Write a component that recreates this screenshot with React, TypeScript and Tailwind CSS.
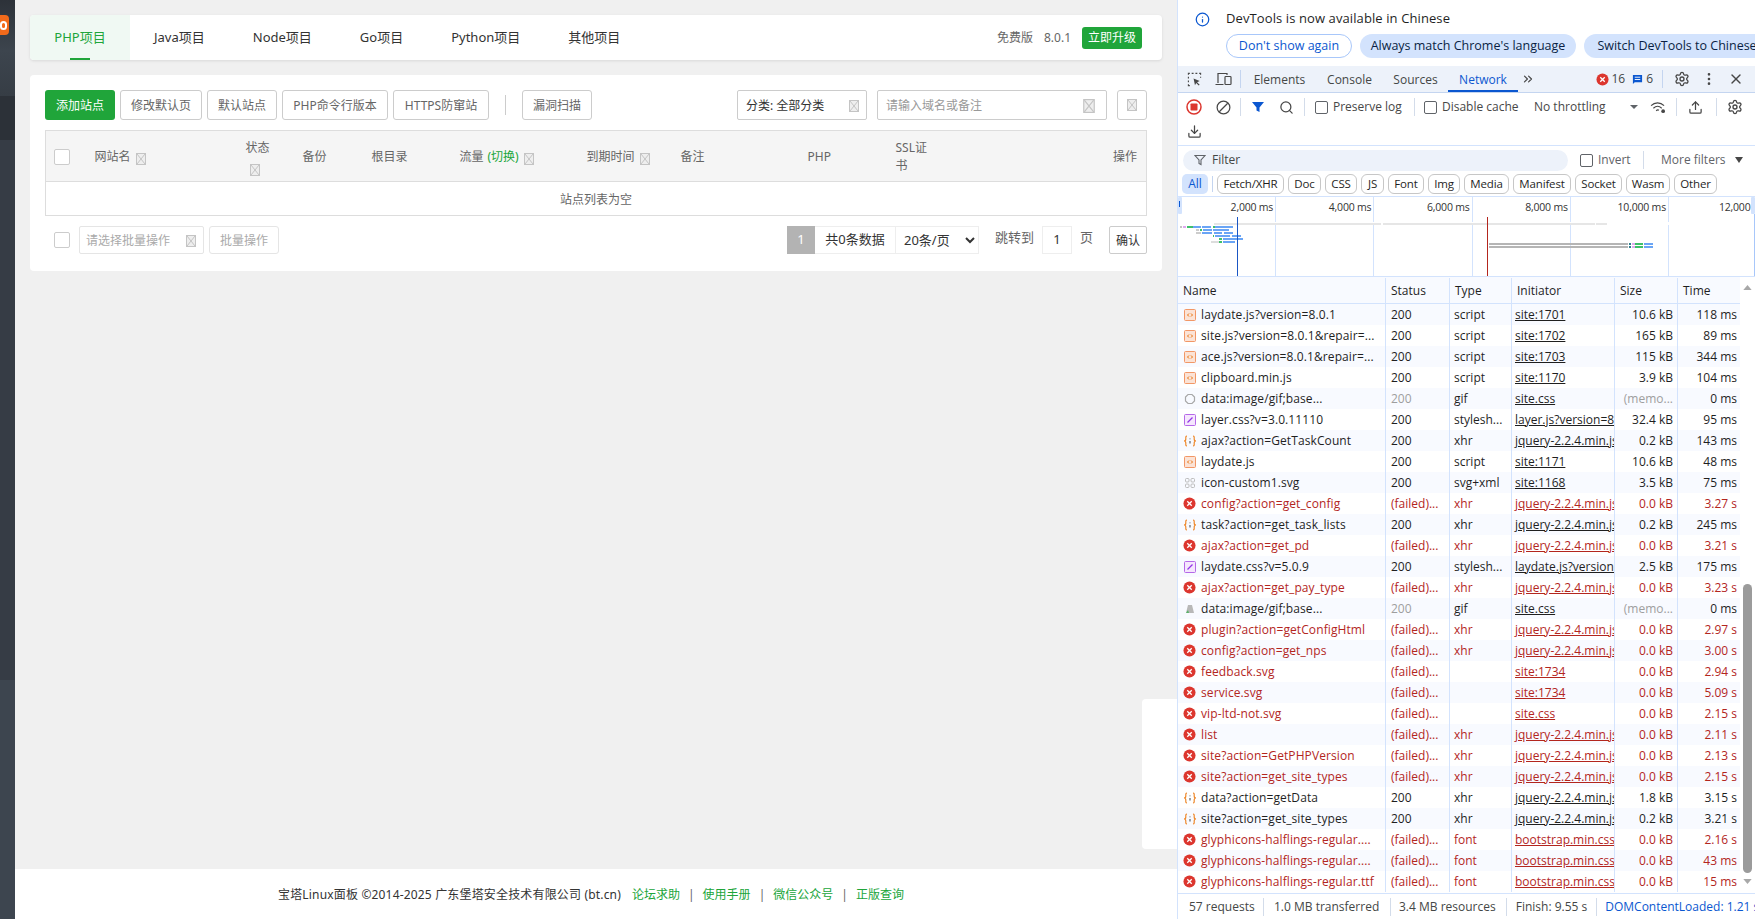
import { ChevronsRight, Download, Info, MoreVertical, Search, Settings, Upload, X } from 'lucide-react';

const tabs = [
  { label: 'PHP项目', active: true },
  { label: 'Java项目' },
  { label: 'Node项目' },
  { label: 'Go项目' },
  { label: 'Python项目' },
  { label: '其他项目' },
];

const typeFilters = [
  { label: 'Fetch/XHR', w: 'w-[67px]' },
  { label: 'Doc', w: 'w-[33px]' },
  { label: 'CSS', w: 'w-[32px]' },
  { label: 'JS', w: 'w-[23px]' },
  { label: 'Font', w: 'w-[36px]' },
  { label: 'Img', w: 'w-[32px]' },
  { label: 'Media', w: 'w-[45px]' },
  { label: 'Manifest', w: 'w-[58px]' },
  { label: 'Socket', w: 'w-[47px]' },
  { label: 'Wasm', w: 'w-[44px]' },
  { label: 'Other', w: 'w-[43px]' },
];

type Kind = 'script' | 'css' | 'xhr' | 'fail' | 'gif' | 'svg' | 'img';
type Req = { name: string; status: string; type: string; init: string; size: string; time: string; kind: Kind };

const jq = 'jquery-2.2.4.min.js';
const boot = 'bootstrap.min.css';
const requests: Req[] = [
  { name: 'laydate.js?version=8.0.1', status: '200', type: 'script', init: 'site:1701', size: '10.6 kB', time: '118 ms', kind: 'script' },
  { name: 'site.js?version=8.0.1&repair=...', status: '200', type: 'script', init: 'site:1702', size: '165 kB', time: '89 ms', kind: 'script' },
  { name: 'ace.js?version=8.0.1&repair=...', status: '200', type: 'script', init: 'site:1703', size: '115 kB', time: '344 ms', kind: 'script' },
  { name: 'clipboard.min.js', status: '200', type: 'script', init: 'site:1170', size: '3.9 kB', time: '104 ms', kind: 'script' },
  { name: 'data:image/gif;base...', status: '200', type: 'gif', init: 'site.css', size: '(memo...', time: '0 ms', kind: 'gif' },
  { name: 'layer.css?v=3.0.11110', status: '200', type: 'stylesh...', init: 'layer.js?version=8.0.1', size: '32.4 kB', time: '95 ms', kind: 'css' },
  { name: 'ajax?action=GetTaskCount', status: '200', type: 'xhr', init: jq, size: '0.2 kB', time: '143 ms', kind: 'xhr' },
  { name: 'laydate.js', status: '200', type: 'script', init: 'site:1171', size: '10.6 kB', time: '48 ms', kind: 'script' },
  { name: 'icon-custom1.svg', status: '200', type: 'svg+xml', init: 'site:1168', size: '3.5 kB', time: '75 ms', kind: 'svg' },
  { name: 'config?action=get_config', status: '(failed)...', type: 'xhr', init: jq, size: '0.0 kB', time: '3.27 s', kind: 'fail' },
  { name: 'task?action=get_task_lists', status: '200', type: 'xhr', init: jq, size: '0.2 kB', time: '245 ms', kind: 'xhr' },
  { name: 'ajax?action=get_pd', status: '(failed)...', type: 'xhr', init: jq, size: '0.0 kB', time: '3.21 s', kind: 'fail' },
  { name: 'laydate.css?v=5.0.9', status: '200', type: 'stylesh...', init: 'laydate.js?version=8.0.1', size: '2.5 kB', time: '175 ms', kind: 'css' },
  { name: 'ajax?action=get_pay_type', status: '(failed)...', type: 'xhr', init: jq, size: '0.0 kB', time: '3.23 s', kind: 'fail' },
  { name: 'data:image/gif;base...', status: '200', type: 'gif', init: 'site.css', size: '(memo...', time: '0 ms', kind: 'img' },
  { name: 'plugin?action=getConfigHtml', status: '(failed)...', type: 'xhr', init: jq, size: '0.0 kB', time: '2.97 s', kind: 'fail' },
  { name: 'config?action=get_nps', status: '(failed)...', type: 'xhr', init: jq, size: '0.0 kB', time: '3.00 s', kind: 'fail' },
  { name: 'feedback.svg', status: '(failed)...', type: '', init: 'site:1734', size: '0.0 kB', time: '2.94 s', kind: 'fail' },
  { name: 'service.svg', status: '(failed)...', type: '', init: 'site:1734', size: '0.0 kB', time: '5.09 s', kind: 'fail' },
  { name: 'vip-ltd-not.svg', status: '(failed)...', type: '', init: 'site.css', size: '0.0 kB', time: '2.15 s', kind: 'fail' },
  { name: 'list', status: '(failed)...', type: 'xhr', init: jq, size: '0.0 kB', time: '2.11 s', kind: 'fail' },
  { name: 'site?action=GetPHPVersion', status: '(failed)...', type: 'xhr', init: jq, size: '0.0 kB', time: '2.13 s', kind: 'fail' },
  { name: 'site?action=get_site_types', status: '(failed)...', type: 'xhr', init: jq, size: '0.0 kB', time: '2.15 s', kind: 'fail' },
  { name: 'data?action=getData', status: '200', type: 'xhr', init: jq, size: '1.8 kB', time: '3.15 s', kind: 'xhr' },
  { name: 'site?action=get_site_types', status: '200', type: 'xhr', init: jq, size: '0.2 kB', time: '3.21 s', kind: 'xhr' },
  { name: 'glyphicons-halflings-regular....', status: '(failed)...', type: 'font', init: boot, size: '0.0 kB', time: '2.16 s', kind: 'fail' },
  { name: 'glyphicons-halflings-regular....', status: '(failed)...', type: 'font', init: boot, size: '0.0 kB', time: '43 ms', kind: 'fail' },
  { name: 'glyphicons-halflings-regular.ttf', status: '(failed)...', type: 'font', init: boot, size: '0.0 kB', time: '15 ms', kind: 'fail' },
];

// bars of the overview chart, in page coordinates
const overviewBars: [number, number, number, string][] = [
  [1214, 223, 12, '#e6e6e6'], [1226, 223, 155, '#e6e6e6'], [1383, 223, 212, '#e6e6e6'], [1596, 223, 11, '#e6e6e6'],
  [1180, 226, 2, '#c4c4c4'], [1183, 226, 3, '#e0a8f0'], [1187, 226, 6, '#3fc06a'], [1193, 226, 8, '#6aa5f5'], [1202, 226, 9, '#6aa5f5'], [1213, 226, 2, '#3fc06a'], [1215, 226, 18, '#6aa5f5'],
  [1196, 229, 3, '#cccccc'], [1200, 229, 2, '#3fc06a'], [1203, 229, 9, '#6aa5f5'], [1213, 229, 16, '#6aa5f5'],
  [1196, 232, 5, '#cccccc'], [1202, 232, 10, '#6aa5f5'], [1214, 232, 8, '#6aa5f5'], [1224, 232, 9, '#6aa5f5'],
  [1213, 235, 1, '#3fc06a'], [1215, 235, 15, '#6aa5f5'], [1232, 235, 9, '#6aa5f5'],
  [1219, 238, 3, '#3fc06a'], [1223, 238, 20, '#6aa5f5'],
  [1211, 241, 8, '#dddddd'], [1219, 241, 3, '#3fc06a'], [1223, 241, 12, '#6aa5f5'],
  [1489, 243, 139, '#b5b5b5'], [1489, 246, 139, '#b5b5b5'],
  [1629, 243, 2, '#2f7f8f'], [1629, 246, 2, '#2f7f8f'], [1632, 243, 3, '#e0a8f0'], [1632, 246, 3, '#e0a8f0'],
  [1635, 243, 8, '#3fc06a'], [1635, 246, 8, '#3fc06a'], [1644, 243, 9, '#6aa5f5'], [1644, 246, 9, '#6aa5f5'],
];

function BrokenImg({ className = '' }: { className?: string }) {
  return (
    <svg viewBox="0 0 10 12" className={`w-[10px] h-[12px] shrink-0 ${className}`} fill="none" stroke="#c4c4c4" strokeWidth="1">
      <rect x="0.5" y="0.5" width="9" height="11" fill="#eeeeee" />
      <path d="M1 1l8 10M9 1L1 11" />
    </svg>
  );
}

function CheckBox() {
  return <div className="w-4 h-4 rounded-[2px] border border-[#cccccc] bg-white shrink-0" />;
}

function DevCheck() {
  return <span className="block w-[13px] h-[13px] rounded-[2px] border border-[#5f6368] bg-white shrink-0" />;
}

function ToolSep() {
  return <span className="block w-px h-[18px] bg-[#d3dcea] shrink-0" />;
}

function ReqIcon({ kind }: { kind: Kind }) {
  if (kind === 'fail') {
    return (
      <svg viewBox="0 0 14 14" className="w-[13px] h-[13px]">
        <circle cx="7" cy="7" r="6.5" fill="#dc362e" />
        <path d="M4.6 4.6l4.8 4.8M9.4 4.6L4.6 9.4" stroke="#fff" strokeWidth="1.4" />
      </svg>
    );
  }
  if (kind === 'script') {
    return (
      <svg viewBox="0 0 12 12" className="w-[12px] h-[12px]" fill="none">
        <rect x="0.5" y="0.5" width="11" height="11" rx="1" fill="#fbe3d6" stroke="#f29766" />
        <path d="M5 4.5L3.5 6 5 7.5M7 4.5L8.5 6 7 7.5" stroke="#e8710a" />
      </svg>
    );
  }
  if (kind === 'css') {
    return (
      <svg viewBox="0 0 12 12" className="w-[12px] h-[12px]" fill="none">
        <rect x="0.5" y="0.5" width="11" height="11" rx="1" fill="#f5e6fd" stroke="#b568e8" />
        <path d="M3.5 8.5L8.5 3.5" stroke="#9334e6" strokeWidth="1.2" />
      </svg>
    );
  }
  if (kind === 'xhr') {
    return (
      <svg viewBox="0 0 14 12" className="w-[14px] h-[12px]" fill="none" stroke="#ee8a2e" strokeWidth="1.2">
        <path d="M4 1C2.500 1 2.800 2.500 2.800 4S2.400 6 1 6c1.400 0 1.800.5 1.800 2S2.500 11 4 11M10 1c1.500 0 1.200 1.500 1.200 3S11.600 6 13 6c-1.400 0-1.800.5-1.800 2s.3 3-1.200 3" />
        <path d="M7 3.500v.8M7 6v2.500" stroke="#5f6368" />
      </svg>
    );
  }
  if (kind === 'svg') {
    return (
      <svg viewBox="0 0 12 12" className="w-[12px] h-[12px]" fill="none" stroke="#bdbdbd">
        <rect x="1.500" y="1.500" width="3.500" height="3.500" rx="1" />
        <rect x="7" y="1.500" width="3.500" height="3.500" rx="1" />
        <rect x="1.500" y="7" width="3.500" height="3.500" rx="1" />
        <rect x="7" y="7" width="3.500" height="3.500" rx="1" />
      </svg>
    );
  }
  if (kind === 'img') {
    return (
      <svg viewBox="0 0 12 12" className="w-[12px] h-[12px]">
        <path d="M4 2h4l2 8H2z" fill="#b8b8b8" />
        <path d="M2 10h3l-1-3z" fill="#58b368" />
      </svg>
    );
  }
  return (
    <svg viewBox="0 0 12 12" className="w-[12px] h-[12px]" fill="none" stroke="#a8a8a8" strokeWidth="1.2">
      <path d="M4 1.500h4L10.500 4v4L8 10.500H4L1.500 8V4z" />
    </svg>
  );
}

function SitePanel() {
  return (
    <div className="flex-1 flex flex-col min-h-0">
      <div className="px-[15px] pt-[15px]">
        <div className="h-[45px] bg-white rounded-[4px] shadow-[0_1px_3px_rgba(0,0,0,0.1)] flex items-center pr-5">
          {tabs.map((t) =>
            t.active ? (
              <div key={t.label} className="relative h-full w-[100px] rounded-l-[4px] bg-[#f0f9f3] text-[#20a53a] text-[13px] flex items-center justify-center">
                {t.label}
                <span className="absolute bottom-0 left-[40px] w-[20px] h-[2px] bg-[#20a53a]" />
              </div>
            ) : (
              <div key={t.label} className="h-full px-[24px] text-[#333333] text-[13px] flex items-center">
                {t.label}
              </div>
            ),
          )}
          <div className="ml-auto flex items-center text-[12px] text-[#666666]">
            <span>免费版</span>
            <span className="ml-[11px]">8.0.1</span>
            <button className="ml-[11px] w-[60px] h-[22px] rounded-[3px] bg-[#20a53a] text-white text-[12px]">立即升级</button>
          </div>
        </div>
      </div>

      <div className="mx-[15px] mt-[15px] h-[196px] bg-white rounded-[4px] px-[15px] pt-[15px]">
        <div className="flex items-center h-[30px] text-[12px]">
          <button className="pt-px w-[70px] h-[30px] rounded-[3px] bg-[#20a53a] text-white">添加站点</button>
          <button className="pt-px ml-[5px] w-[82px] h-[30px] rounded-[3px] border border-[#cccccc] text-[#666666] bg-white">修改默认页</button>
          <button className="pt-px ml-[5px] w-[70px] h-[30px] rounded-[3px] border border-[#cccccc] text-[#666666] bg-white">默认站点</button>
          <button className="pt-px ml-[5px] w-[106px] h-[30px] rounded-[3px] border border-[#cccccc] text-[#666666] bg-white">PHP命令行版本</button>
          <button className="pt-px ml-[5px] w-[96px] h-[30px] rounded-[3px] border border-[#cccccc] text-[#666666] bg-white">HTTPS防窜站</button>
          <span className="ml-4 w-px h-5 bg-[#cccccc]" />
          <button className="pt-px ml-4 w-[70px] h-[30px] rounded-[3px] border border-[#cccccc] text-[#666666] bg-white">漏洞扫描</button>
          <div className="pt-px ml-auto w-[130px] h-[30px] border border-[#cccccc] rounded-[2px] flex items-center justify-between pl-[8px] pr-[7px] text-[#333333]">
            分类: 全部分类
            <BrokenImg />
          </div>
          <div className="pt-px ml-[10px] w-[230px] h-[30px] border border-[#cccccc] rounded-[2px] flex items-center justify-between pl-[8px] pr-[11px] text-[#999999]">
            请输入域名或备注
            <BrokenImg className="!w-[12px] !h-[14px]" />
          </div>
          <div className="ml-[10px] w-[30px] h-[30px] border border-[#cccccc] rounded-[3px] flex items-center justify-center">
            <BrokenImg />
          </div>
        </div>

        <table className="mt-[10px] w-full table-fixed border-collapse border border-[#dddddd] text-[12px] text-[#666666]">
          <colgroup>
            <col className="w-[40px]" />
            <col className="w-[151px]" />
            <col className="w-[56px]" />
            <col className="w-[70px]" />
            <col className="w-[88px]" />
            <col className="w-[127px]" />
            <col className="w-[94px]" />
            <col className="w-[126px]" />
            <col className="w-[88px]" />
            <col className="w-[55px]" />
            <col />
          </colgroup>
          <thead>
            <tr className="h-[51px] bg-[#f5f5f5] border-b border-[#dddddd] text-left [&>th]:pt-[2px]">
              <th className="pl-[8px] font-normal"><CheckBox /></th>
              <th className="pl-[9px] font-normal"><span className="flex items-center gap-[5px]">网站名<BrokenImg className="mt-[3px]" /></span></th>
              <th className="pl-[9px] font-normal">状态<BrokenImg className="mt-[7px] ml-[4px]" /></th>
              <th className="pl-[10px] font-normal">备份</th>
              <th className="pl-[9px] font-normal">根目录</th>
              <th className="pl-[9px] font-normal">
                <span className="flex items-center">流量<span className="ml-1 text-[#20a53a]">(切换)</span><BrokenImg className="ml-[5px] mt-[3px]" /></span>
              </th>
              <th className="pl-[9px] font-normal"><span className="flex items-center gap-[5px]">到期时间<BrokenImg className="mt-[3px]" /></span></th>
              <th className="pl-[9px] font-normal">备注</th>
              <th className="pl-[10px] font-normal">PHP</th>
              <th className="pl-[10px] font-normal leading-[18px]"><span className="block w-[36px]">SSL证书</span></th>
              <th className="pr-[9px] font-normal text-right">操作</th>
            </tr>
          </thead>
          <tbody>
            <tr className="h-[34px]">
              <td colSpan={11} className="pt-[2px] text-center">站点列表为空</td>
            </tr>
          </tbody>
        </table>

        <div className="mt-[10px] h-[28px] flex items-center text-[12px]">
          <div className="ml-[9px]"><CheckBox /></div>
          <div className="pt-px ml-[9px] w-[125px] h-[28px] border border-[#e5e5e5] rounded-[2px] flex items-center justify-between pl-[6px] pr-[7px] text-[#aaaaaa]">
            请选择批量操作
            <BrokenImg />
          </div>
          <button className="pt-px ml-[5px] w-[70px] h-[28px] border border-[#e5e5e5] rounded-[3px] text-[#aaaaaa]">批量操作</button>
          <div className="ml-auto flex items-center h-[28px] text-[#666666] text-[13px]">
            <span className="w-[28px] h-[28px] bg-[#b3b3b3] text-white flex items-center justify-center">1</span>
            <span className="w-[81px] h-[28px] border-y border-[#eeeeee] border-r text-[#333333] flex items-center justify-center">共0条数据</span>
            <select defaultValue="20" className="w-[83px] h-[28px] border-y border-r border-[#eeeeee] pl-[4px] text-[#333333] bg-white">
              <option value="20">20条/页</option>
            </select>
            <span className="ml-4 -mt-1">跳转到</span>
            <span className="ml-2 w-[30px] h-[28px] border border-[#eeeeee] text-[#333333] flex items-center justify-center">1</span>
            <span className="ml-2 -mt-1">页</span>
            <button className="pt-px ml-4 w-[38px] h-[28px] border border-[#cccccc] rounded-[2px] text-[#333333] text-[12px]">确认</button>
          </div>
        </div>
      </div>

      <div className="flex-1" />

      <div className="h-[50px] pt-[2px] bg-white shrink-0 flex items-center text-[12px] text-[#333333] pl-[263px]">
        <span className="tracking-[0.17px]">宝塔Linux面板 ©2014-2025 广东堡塔安全技术有限公司 (bt.cn)</span>
        <a className="ml-[11px] text-[#20a53a]">论坛求助</a>
        <span className="mx-[8px] text-[#666666]">|</span>
        <a className="text-[#20a53a]">使用手册</a>
        <span className="mx-[8px] text-[#666666]">|</span>
        <a className="text-[#20a53a]">微信公众号</a>
        <span className="mx-[8px] text-[#666666]">|</span>
        <a className="text-[#20a53a]">正版查询</a>
      </div>
    </div>
  );
}

function Overview() {
  const ticks = ['2,000 ms', '4,000 ms', '6,000 ms', '8,000 ms', '10,000 ms'];
  return (
    <div className="relative h-[81px] border-y border-[#d3e3fd] overflow-hidden">
      <div className="flex h-full text-[10.500px] tracking-[-0.2px] text-[#333333]">
        {ticks.map((t) => (
          <div key={t} className="w-[98.200px] shrink-0 border-r border-[#d3e3fd] text-right pr-[2px] pt-[3px]">{t}</div>
        ))}
        <div className="pl-[50px] pt-[3px] whitespace-nowrap">12,000</div>
      </div>
      <svg viewBox="1178 197 577 79" className="absolute inset-0 w-full h-full">
        <rect x="1178" y="222" width="577" height="3" fill="#ffffff" />
        {overviewBars.map(([x, y, w, c], i) => (
          <rect key={i} x={x} y={y} width={w} height="2" fill={c} />
        ))}
        <rect x="1237" y="217" width="1" height="60" fill="#1a56c4" />
        <rect x="1487" y="217" width="1" height="60" fill="#b3261e" />
        <rect x="1178" y="197" width="4" height="17" rx="1" fill="#d3e3fd" />
        <rect x="1179" y="201" width="1" height="6" fill="#0b57d0" />
        <rect x="1751" y="197" width="4" height="17" rx="1" fill="#d3e3fd" />
        <rect x="1754" y="214" width="1" height="63" fill="#a8c7fa" />
      </svg>
    </div>
  );
}

function DevTools() {
  return (
    <div className="w-[578px] h-full shrink-0 bg-white border-l border-[#d3e3fd] flex flex-col overflow-hidden text-[12px] text-[#1f1f1f] [font-family:'Open_Sans',sans-serif]">
      <div className="h-[66px] shrink-0 pl-[17px] pt-[9px] overflow-hidden">
        <div className="flex items-center h-[20px]">
          <Info className="w-[15px] h-[15px] text-[#0b57d0]" />
          <span className="ml-[16px] text-[13px] tracking-[0.1px] text-[#1f1f1f]">DevTools is now available in Chinese</span>
        </div>
        <div className="flex items-center gap-[8px] ml-[31px] mt-[5px] whitespace-nowrap text-[12.500px]">
          <button className="w-[126px] h-[24px] shrink-0 rounded-full border border-[#a8c7fa] text-[#0b57d0]">Don't show again</button>
          <button className="w-[216px] h-[24px] shrink-0 rounded-full bg-[#d3e3fd] text-[#0a1f44]">Always match Chrome's language</button>
          <button className="w-[186px] h-[24px] shrink-0 rounded-full bg-[#d3e3fd] text-[#0a1f44]">Switch DevTools to Chinese</button>
        </div>
      </div>

      <div className="h-[27px] shrink-0 bg-[#edf2fa] border-b border-[#c4d5f0] flex items-center text-[#444746]">
        <div className="w-[30px] ml-[1px] flex justify-center">
          <svg viewBox="0 0 16 16" className="w-[15px] h-[15px]" fill="none" stroke="#474747">
            <path d="M1.500 3V1.500H3M5 1.500h2M9 1.500h2M13 1.500h1.500V3M1.500 5v2M1.500 9v2M1.500 13v1.500H3M14.500 5v1" strokeWidth="1.200" />
            <path d="M7 7l6.500 2.500-2.700 1.300 2.700 2.700-1 1-2.700-2.700L8.500 14z" fill="#474747" stroke="none" />
          </svg>
        </div>
        <div className="w-[28px] flex justify-center">
          <svg viewBox="0 0 17 14" className="w-[17px] h-[14px]" fill="none" stroke="#474747" strokeWidth="1.200">
            <path d="M3 11V1.500h9V3M0.500 12.500h8" />
            <rect x="10" y="4.500" width="6" height="8" rx="0.800" />
          </svg>
        </div>
        <span className="ml-[3px] w-px h-[18px] bg-[#c4d5f0]" />
        <div className="pt-px ml-[2px] w-[73px] text-center">Elements</div>
        <div className="pt-px w-[67px] text-center">Console</div>
        <div className="pt-px w-[65px] text-center">Sources</div>
        <div className="pt-px relative w-[70px] h-full flex items-center justify-center text-[#0b57d0]">
          Network
          <span className="absolute left-0 right-0 bottom-0 h-[2px] bg-[#0b57d0]" />
        </div>
        <ChevronsRight className="ml-[3px] w-[14px] h-[14px] text-[#474747]" />
        <div className="ml-auto flex items-center">
          <ReqIcon kind="fail" />
          <span className="ml-[2px]">16</span>
          <svg viewBox="0 0 12 12" className="ml-[7px] w-[11px] h-[11px]">
            <path d="M1 1h10v8H3l-2 2z" fill="#0b57d0" />
            <path d="M3 3.500h6M3 6h6" stroke="#fff" />
          </svg>
          <span className="ml-[3px]">6</span>
          <span className="ml-[9px] w-px h-[18px] bg-[#c4d5f0]" />
          <Settings className="ml-[11px] w-[16px] h-[16px] text-[#474747]" />
          <MoreVertical className="ml-[11px] w-[16px] h-[16px] text-[#474747]" />
          <X className="ml-[11px] mr-[11px] w-[16px] h-[16px] text-[#474747]" />
        </div>
      </div>

      <div className="h-[28px] shrink-0 flex items-center text-[#474747] whitespace-nowrap">
        <div className="w-[30px] ml-[1px] flex justify-center">
          <svg viewBox="0 0 16 16" className="w-[16px] h-[16px]">
            <circle cx="8" cy="8" r="7" fill="none" stroke="#dc362e" strokeWidth="1.500" />
            <rect x="4.500" y="4.500" width="7" height="7" rx="0.800" fill="#dc362e" />
          </svg>
        </div>
        <div className="w-[28px] flex justify-center">
          <svg viewBox="0 0 16 16" className="w-[15px] h-[15px]" fill="none" stroke="#474747" strokeWidth="1.300">
            <circle cx="8" cy="8" r="6.800" />
            <path d="M3.500 12.500l9-9" />
          </svg>
        </div>
        <span className="ml-[3px]"><ToolSep /></span>
        <svg viewBox="0 0 14 14" className="ml-[10px] w-[14px] h-[14px]"><path d="M1 2h12L8.500 7.500V12L5.500 10.500V7.500z" fill="#0b57d0" /></svg>
        <Search className="ml-[14px] w-[15px] h-[15px]" />
        <span className="ml-[10px]"><ToolSep /></span>
        <span className="ml-[10px]"><DevCheck /></span>
        <span className="ml-[5px] w-[70px]">Preserve log</span>
        <span className="ml-[11px]"><ToolSep /></span>
        <span className="ml-[9px]"><DevCheck /></span>
        <span className="ml-[5px] w-[78px]">Disable cache</span>
        <span className="ml-[14px] w-[96px]">No throttling</span>
        <svg viewBox="0 0 8 4" className="w-[8px] h-[4px]"><path d="M0 0h8L4 4z" fill="#5f6368" /></svg>
        <svg viewBox="0 0 18 14" className="ml-[12px] w-[17px] h-[13px]" fill="none" stroke="#474747" strokeWidth="1.200">
          <path d="M1 5c4-4 10-4 14 0M3.500 7.800c2.700-2.600 6.300-2.600 9 0M6.500 10.500c1-1 2.400-1 3-.6" />
          <circle cx="14" cy="11" r="2" fill="#474747" stroke="none" />
        </svg>
        <span className="ml-[9px]"><ToolSep /></span>
        <Upload className="ml-[11px] w-[15px] h-[15px]" />
        <span className="ml-[13px]"><ToolSep /></span>
        <Settings className="ml-[10px] w-[16px] h-[16px]" />
      </div>
      <div className="h-[25px] shrink-0 flex items-start pl-[9px] border-b border-[#d3e3fd] text-[#474747]">
        <Download className="mt-[3px] w-[15px] h-[15px]" />
      </div>

      <div className="h-[28px] shrink-0 flex items-center pl-[5px] text-[#5f6368]">
        <div className="w-[385px] h-[21px] rounded-full bg-[#edf2fa] flex items-center pl-[11px]">
          <svg viewBox="0 0 12 12" className="w-[12px] h-[12px]" fill="none" stroke="#5f6368" strokeWidth="1.100"><path d="M1 1.500h10L7 6v4.500L5 9.500V6z" /></svg>
          <span className="ml-[6px] text-[#444746]">Filter</span>
        </div>
        <span className="ml-[12px]"><DevCheck /></span>
        <span className="ml-[5px] w-[36px]">Invert</span>
        <span className="ml-[9px]"><ToolSep /></span>
        <span className="ml-[17px] w-[70px] whitespace-nowrap">More filters</span>
        <svg viewBox="0 0 8 6" className="ml-[4px] w-[8px] h-[6px]"><path d="M0 0h8L4 6z" fill="#474747" /></svg>
      </div>

      <div className="h-[22px] shrink-0 flex items-start pl-[4px] text-[#1f1f1f]">
        <span className="w-[26px] h-[20px] rounded-[5px] bg-[#d3e3fd] text-[#0b57d0] flex items-center justify-center">All</span>
        <span className="ml-[4px] mt-[2px] w-px h-[16px] bg-[#c4d5f0]" />
        <div className="ml-[4px] flex gap-[4px]">
          {typeFilters.map((f) => (
            <span key={f.label} className={`${f.w} h-[20px] rounded-[6px] border border-[#c7c7c7] flex items-center justify-center whitespace-nowrap text-[11.500px] tracking-[-0.15px]`}>
              {f.label}
            </span>
          ))}
        </div>
      </div>

      <Overview />

      <div className="flex-1 min-h-0 flex">
        <div className="w-[562px] shrink-0">
          <div className="h-[27px] pt-px grid grid-cols-[208px_64px_62px_103px_63px_62px] bg-[#f8faff] border-b border-[#d3e3fd]">
            {['Name', 'Status', 'Type', 'Initiator', 'Size', 'Time'].map((h, i) => (
              <div key={h} className={`flex items-center pl-[5px] ${i < 5 ? 'border-r border-[#d3e3fd]' : ''}`}>{h}</div>
            ))}
          </div>
          {requests.map((r, i) => {
            const failed = r.kind === 'fail';
            return (
              <div key={i} className={`h-[21px] grid grid-cols-[208px_64px_62px_103px_63px_62px] items-stretch ${i % 2 === 0 ? 'bg-[#f8faff]' : 'bg-white'} ${failed ? 'text-[#b3261e]' : 'text-[#1f1f1f]'}`}>
                <div className="flex items-center border-r border-[#d3e3fd] overflow-hidden whitespace-nowrap tracking-[0.1px]">
                  <span className="w-[23px] shrink-0 flex justify-center"><ReqIcon kind={r.kind} /></span>
                  {r.name}
                </div>
                <div className={`flex items-center pl-[5px] border-r border-[#d3e3fd] ${r.kind === 'gif' || r.kind === 'img' ? 'text-[#9e9e9e]' : ''}`}>{r.status}</div>
                <div className="flex items-center pl-[4px] border-r border-[#d3e3fd]">{r.type}</div>
                <div className="flex items-center pl-[3px] border-r border-[#d3e3fd] overflow-hidden whitespace-nowrap underline">{r.init}</div>
                <div className={`flex items-center justify-end pr-[4px] border-r border-[#d3e3fd] ${r.size.startsWith('(') ? 'text-[#9e9e9e]' : ''}`}>{r.size}</div>
                <div className="flex items-center justify-end pr-[3px]">{r.time}</div>
              </div>
            );
          })}
        </div>
        <div className="w-[15px] shrink-0 flex flex-col items-center bg-white">
          <svg viewBox="0 0 10 6" className="mt-[8px] w-[9px] h-[5px]"><path d="M0 6L5 0l5 6z" fill="#a8a8a8" /></svg>
          <div className="mt-[294px] w-[9px] h-[289px] rounded-full bg-[#9b9b9b]" />
          <svg viewBox="0 0 10 6" className="mt-[6px] w-[9px] h-[5px]"><path d="M0 0l5 6 5-6z" fill="#a8a8a8" /></svg>
        </div>
      </div>

      <div className="h-[26px] shrink-0 border-t border-[#d3e3fd] flex items-center whitespace-nowrap text-[#444746] pl-[11px]">
        <span className="w-[65px]">57 requests</span>
        <span className="ml-[9px]"><ToolSep /></span>
        <span className="ml-[10px] w-[105px]">1.0 MB transferred</span>
        <span className="ml-[11px]"><ToolSep /></span>
        <span className="ml-[8px] w-[97px]">3.4 MB resources</span>
        <span className="ml-[10px]"><ToolSep /></span>
        <span className="ml-[9px] w-[72px]">Finish: 9.55 s</span>
        <span className="ml-[9px]"><ToolSep /></span>
        <span className="ml-[8px] text-[#0b57d0]">DOMContentLoaded: 1.21 s</span>
      </div>
    </div>
  );
}

export default function App() {
  return (
    <div className="relative flex h-[919px] w-[1755px] overflow-hidden bg-[#f0f0f0] [font-family:'Noto_Sans','Noto_Sans_CJK_SC',sans-serif]">
      {/* collapsed sidebar, only the right edge is visible */}
      <div className="w-[15px] shrink-0 flex flex-col">
        <div className="relative h-[50px] bg-gradient-to-b from-[#2d3239] to-[#3c444d] overflow-hidden">
          <div className="absolute -left-[11px] top-[15px] w-[20px] h-[20px] rounded-[4px] bg-[#f26a1b] flex items-center justify-end pr-[2px]">
            <span className="w-[7px] h-[9px] rounded-full border-2 border-white" />
          </div>
        </div>
        <div className="h-[46px] bg-gradient-to-b from-[#3d454e] to-[#363d45]" />
        <div className="h-[44px] bg-[#2c3138]" />
        <div className="h-[540px] bg-[#363c45]" />
        <div className="flex-1 bg-[#3d454f]" />
      </div>
      <div className="w-[1162px] shrink-0 flex flex-col">
        <SitePanel />
      </div>
      <DevTools />
      <div className="absolute left-[1142px] top-[699px] w-[35px] h-[150px] bg-white rounded-l-[4px]" />
    </div>
  );
}
